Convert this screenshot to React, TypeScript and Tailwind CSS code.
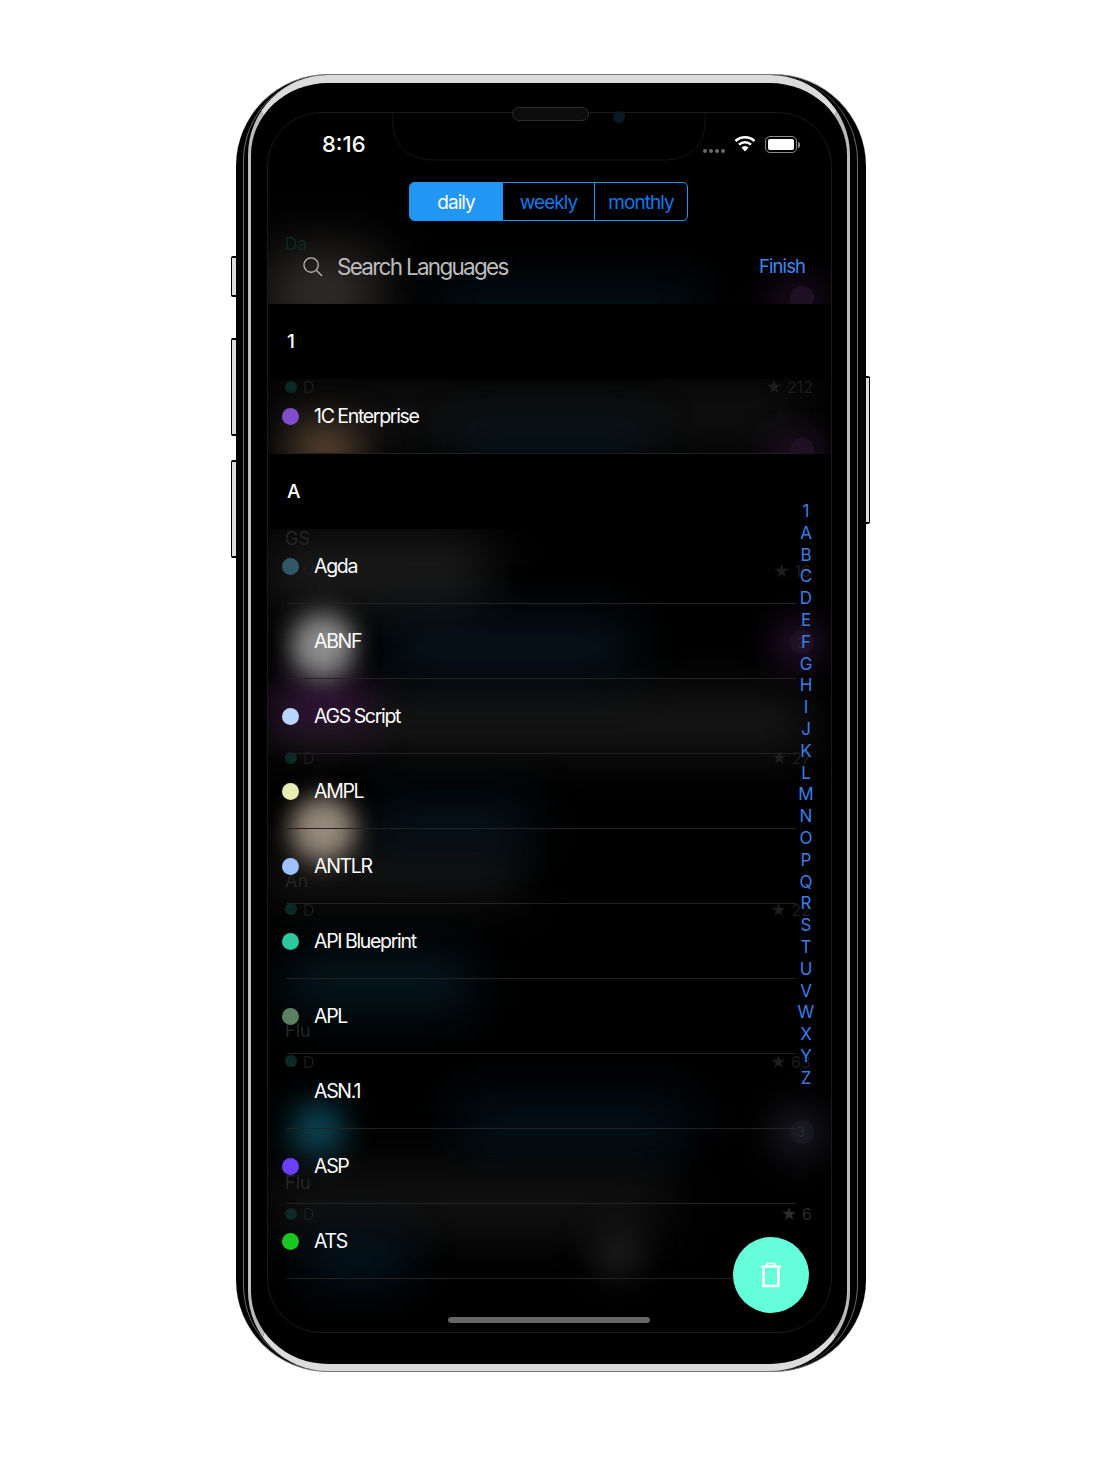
const sections = [
  {
    title: "1",
    rows: [{ name: "1C Enterprise", dot: "bg-[#814ccc]" }],
  },
  {
    title: "A",
    rows: [
      { name: "Agda", dot: "bg-[#315665]" },
      { name: "ABNF", dot: "" },
      { name: "AGS Script", dot: "bg-[#b9d6ff]" },
      { name: "AMPL", dot: "bg-[#e6efb3]" },
      { name: "ANTLR", dot: "bg-[#9ec1ff]" },
      { name: "API Blueprint", dot: "bg-[#2dc8a0]" },
      { name: "APL", dot: "bg-[#5a8164]" },
      { name: "ASN.1", dot: "" },
      { name: "ASP", dot: "bg-[#6a40fd]" },
      { name: "ATS", dot: "bg-[#1ac620]" },
    ],
  },
];

const letters = "1ABCDEFGHIJKLMNOPQRSTUVWXYZ".split("");

// blurred list that scrolled behind the sheet
const glows = [
  "left-[0px] top-[140px] w-[110px] h-[80px] bg-[#4a4442]/70 blur-[28px]",
  "left-[170px] top-[175px] w-[260px] h-[36px] bg-[#041722]/80 blur-[22px]",
  "left-[505px] top-[170px] w-[50px] h-[44px] bg-[#2c1433]/70 blur-[18px]",
  "left-[0px] top-[272px] w-[540px] h-[60px] bg-[#101010] blur-[26px]",
  "left-[25px] top-[318px] w-[64px] h-[36px] bg-[#7a5c42] blur-[20px]",
  "left-[190px] top-[312px] w-[190px] h-[34px] bg-[#061c2a]/70 blur-[22px]",
  "left-[505px] top-[325px] w-[50px] h-[36px] bg-[#2c1433]/80 blur-[16px]",
  "left-[0px] top-[425px] w-[220px] h-[70px] bg-[#1c1c1c] blur-[26px]",
  "left-[0px] top-[580px] w-[540px] h-[60px] bg-[#171717] blur-[24px]",
  "left-[10px] top-[570px] w-[90px] h-[46px] bg-[#34143a] blur-[20px]",
  "left-[22px] top-[500px] w-[66px] h-[66px] rounded-full bg-[#8c8c8c] blur-[12px]",
  "left-[120px] top-[510px] w-[240px] h-[50px] bg-[#05151f] blur-[24px]",
  "left-[505px] top-[505px] w-[50px] h-[50px] rounded-full bg-[#22102a] blur-[16px]",
  "left-[0px] top-[735px] w-[250px] h-[50px] bg-[#181818] blur-[26px]",
  "left-[110px] top-[690px] w-[150px] h-[44px] bg-[#05151f] blur-[24px]",
  "left-[22px] top-[683px] w-[66px] h-[66px] rounded-full bg-[#978a7c] blur-[12px]",
  "left-[20px] top-[845px] w-[180px] h-[50px] bg-[#051a23] blur-[24px]",
  "left-[24px] top-[990px] w-[52px] h-[56px] rounded-full bg-[#0d4c5e] blur-[16px]",
  "left-[190px] top-[990px] w-[230px] h-[46px] bg-[#03131e] blur-[24px]",
  "left-[500px] top-[990px] w-[60px] h-[60px] rounded-full bg-[#14141c] blur-[16px]",
  "left-[0px] top-[1060px] w-[400px] h-[60px] bg-[#131313] blur-[26px]",
  "left-[40px] top-[1120px] w-[100px] h-[50px] bg-[#03131e] blur-[20px]",
  "left-[325px] top-[1115px] w-[50px] h-[50px] rounded-full bg-[#1c1c1c] blur-[16px]",
];

const ghosts = [
  { text: "Da", cls: "left-[17px] top-[123px] text-[17px] text-[#0c2a28]" },
  { text: "★ 212", cls: "right-[18px] top-[266px] text-[16px] text-[#1e1e1e]" },
  { text: "D", cls: "left-[35px] top-[266px] text-[16px] text-[#1c1c1c]" },
  { text: "GS", cls: "left-[17px] top-[417px] text-[18px] text-[#262626]" },
  { text: "D", cls: "left-[35px] top-[447px] text-[16px] text-[#1c1c1c]" },
  { text: "★ 16", cls: "right-[20px] top-[450px] text-[16px] text-[#1e1e1e]" },
  { text: "3", cls: "right-[25px] top-[522px] text-[15px] text-[#30223a]" },
  { text: "★ 27", cls: "right-[20px] top-[637px] text-[16px] text-[#1e1e1e]" },
  { text: "D", cls: "left-[35px] top-[637px] text-[16px] text-[#1c1c1c]" },
  { text: "An", cls: "left-[17px] top-[759px] text-[18px] text-[#262626]" },
  { text: "★ 22", cls: "right-[20px] top-[789px] text-[16px] text-[#1e1e1e]" },
  { text: "D", cls: "left-[35px] top-[789px] text-[16px] text-[#1c1c1c]" },
  { text: "Flu", cls: "left-[17px] top-[909px] text-[18px] text-[#262626]" },
  { text: "★ 63", cls: "right-[20px] top-[941px] text-[16px] text-[#1e1e1e]" },
  { text: "D", cls: "left-[35px] top-[941px] text-[16px] text-[#1c1c1c]" },
  { text: "3", cls: "right-[26px] top-[1012px] text-[14px] text-[#2a2a34]" },
  { text: "Flu", cls: "left-[17px] top-[1061px] text-[18px] text-[#262626]" },
  { text: "★ 6", cls: "right-[19px] top-[1093px] text-[16px] text-[#2c2c2c]" },
  { text: "D", cls: "left-[35px] top-[1093px] text-[16px] text-[#1c1c1c]" },
];

const ghostDots = [
  "top-[268px]",
  "top-[447px]",
  "top-[639px]",
  "top-[790px]",
  "top-[942px]",
  "top-[1095px]",
];

const ghostBadges = [
  "top-[173px] bg-[#1f1024]",
  "top-[325px] bg-[#1f1024]",
  "top-[517px] bg-[#1f1024]",
  "top-[1007px] bg-[#181820]",
];

function Wifi() {
  return (
    <svg width="22" height="17" viewBox="0 0 22 17" fill="none" className="ml-[9px] -mt-[2px]">
      <path d="M1.5 6 A14 14 0 0 1 20.5 6" stroke="white" strokeWidth="2.6" />
      <path d="M5 9.6 A9 9 0 0 1 17 9.6" stroke="white" strokeWidth="2.6" />
      <path d="M7.4 12.6 A5 5 0 0 1 14.6 12.6 L11 16.5 Z" fill="white" />
    </svg>
  );
}

function Battery() {
  return (
    <div className="ml-[9px] flex items-center">
      <div className="w-[32px] h-[17px] rounded-[5px] border border-[#8a8a8a] p-[2px]">
        <div className="w-full h-full rounded-[2px] bg-white" />
      </div>
      <div className="ml-[1px] w-[2px] h-[6px] rounded-r-full bg-[#8a8a8a]" />
    </div>
  );
}

function TrashIcon() {
  return (
    <svg width="22" height="26" viewBox="0 0 22 26" fill="none" stroke="white">
      <path d="M1 4.5 H21" strokeWidth="2.4" />
      <path d="M7 4 V1.5 H15 V4" strokeWidth="1.6" />
      <path d="M3.6 6 V24 H18.4 V6" strokeWidth="2.6" />
    </svg>
  );
}

export default function App() {
  return (
    <div className="relative w-[1105px] h-[1473px] bg-white pt-[74px] pl-[236px] font-['Inter','Noto_Sans',sans-serif]">
      {/* side buttons */}
      <div className="absolute left-[231px] top-[256px] w-[6px] h-[41px] rounded-l-[2px] bg-[#dddddd] border-y-2 border-l border-black" />
      <div className="absolute left-[231px] top-[338px] w-[6px] h-[98px] rounded-l-[2px] bg-[#dddddd] border-y-2 border-l border-black" />
      <div className="absolute left-[231px] top-[460px] w-[6px] h-[98px] rounded-l-[2px] bg-[#dddddd] border-y-2 border-l border-black" />
      <div className="absolute left-[865px] top-[376px] w-[5px] h-[148px] rounded-r-[2px] bg-[#dddddd] border-y-2 border-r border-black" />

      {/* phone body */}
      <div className="relative w-[630px] h-[1298px] rounded-[92px] bg-black border-y border-[#777777] pl-[7px] pr-[8px]">
        <div className="w-full h-full rounded-[86px] border-x border-[#6e6e6e] pl-[4px] pr-[7px]">
          <div className="w-full h-full rounded-[80px] border-x-[3px] border-t-[8px] border-b-[7px] border-x-[#bbbbbb] border-y-[#dcdcdc] bg-black pl-[16px] pr-[15px] pt-[29px]">
            {/* screen */}
            <div className="relative w-[565px] h-[1221px] rounded-[54px] overflow-hidden border border-[#1a1a1a] bg-black flex flex-col text-white">
              {glows.map((g) => (
                <div key={g} className={`absolute ${g}`} />
              ))}
              {ghostBadges.map((b) => (
                <div key={b} className={`absolute left-[522px] w-[24px] h-[24px] rounded-full ${b}`} />
              ))}
              {ghosts.map((g) => (
                <span key={g.cls} className={`absolute leading-none blur-[0.5px] ${g.cls}`}>
                  {g.text}
                </span>
              ))}
              {ghostDots.map((t) => (
                <div key={t} className={`absolute left-[17px] w-[12px] h-[12px] rounded-full bg-[#0b2a27] ${t}`} />
              ))}

              {/* status bar */}
              <div className="relative h-[69px] shrink-0 flex items-start pt-[20px] pl-[54px] pr-[31px]">
                <span className="text-[22px] font-medium leading-[22px]">8:16</span>
                <div className="ml-auto flex items-center pt-[3px]">
                  <div className="flex gap-[2px] mt-[12px]">
                    <span className="w-[4px] h-[4px] rounded-full bg-[#6a6a6a]" />
                    <span className="w-[4px] h-[4px] rounded-full bg-[#6a6a6a]" />
                    <span className="w-[4px] h-[4px] rounded-full bg-[#6a6a6a]" />
                    <span className="w-[4px] h-[4px] rounded-full bg-[#6a6a6a]" />
                  </div>
                  <Wifi />
                  <Battery />
                </div>
              </div>

              {/* segmented control */}
              <div className="relative shrink-0 self-start ml-[141px] flex w-[279px] h-[39px] rounded-[5px] border-[1.5px] border-[#2196f3] text-[19px] tracking-[-0.05em] overflow-hidden">
                <div className="w-[92px] pt-[3px] bg-[#2196f3] text-white flex items-center justify-center">daily</div>
                <div className="w-[92px] pt-[3px] border-l-[1.5px] border-[#2196f3] text-[#0f7be8] flex items-center justify-center">weekly</div>
                <div className="flex-1 pt-[3px] border-l-[1.5px] border-[#2196f3] text-[#0f7be8] flex items-center justify-center">monthly</div>
              </div>

              {/* search */}
              <div className="relative h-[83px] shrink-0 flex items-center pl-[35px] pr-[26px] pt-[8px]">
                <svg width="20" height="20" viewBox="0 0 21 21" fill="none" stroke="#b8b8b8" strokeWidth="1.4">
                  <circle cx="8.5" cy="8.5" r="7.5" />
                  <path d="M14 14 L20 20" />
                </svg>
                <span className="ml-[14px] text-[22.5px] tracking-[-1.72px] text-[#bdbdbd]">Search Languages</span>
                <span className="ml-auto text-[18.5px] tracking-[-0.05em] text-[#3f86f0]">Finish</span>
              </div>

              {/* list */}
              <div className="relative flex flex-col">
                {sections.map((s) => (
                  <div key={s.title}>
                    <div className="h-[75px] bg-black flex items-center pl-[19px] pt-[2px] text-[19px] font-medium">{s.title}</div>
                    {s.rows.map((r) => (
                      <div key={r.name} className="relative h-[75px] flex items-center pl-[14px]">
                        {r.dot ? <div className={`w-[17px] h-[17px] rounded-full ${r.dot}`} /> : <div className="w-[17px] h-[17px]" />}
                        <span className="ml-[15px] text-[19.5px] tracking-[-1.3px] [word-spacing:-0.5px]">{r.name}</span>
                        <div className="absolute left-[19px] right-[35px] bottom-[0px] h-px bg-[#222222]" />
                      </div>
                    ))}
                  </div>
                ))}
              </div>

              {/* alphabet index */}
              <div className="absolute right-[14px] top-[388px] w-[22px] flex flex-col items-center text-[#3c7de8] text-[17px]">
                {letters.map((l) => (
                  <span key={l} className="h-[21.81px] leading-[21.81px]">{l}</span>
                ))}
              </div>

              {/* delete button */}
              <div className="absolute left-[465px] top-[1124px] w-[76px] h-[76px] rounded-full bg-[#64ffda] flex items-center justify-center">
                <TrashIcon />
              </div>

              {/* home indicator */}
              <div className="absolute left-[180px] top-[1204px] w-[202px] h-[6px] rounded-full bg-[#666666]" />

              {/* notch */}
              <div className="absolute left-[123px] top-[-1px] w-[316px] h-[49px]">
                <svg width="316" height="49" viewBox="0 0 316 49" fill="black" stroke="#161616">
                  <path d="M0 0 H3 Q1 0 2 14 C4 34 18 48 44 48 H272 C298 48 312 34 314 14 Q315 0 313 0 H316" />
                </svg>
              </div>
            </div>
          </div>
        </div>

        {/* speaker and camera */}
        <div className="absolute left-[276px] top-[32px] w-[77px] h-[14px] rounded-full bg-[#0c0c0c] border border-[#2c2c2c]" />
        <div className="absolute left-[377px] top-[36px] w-[12px] h-[12px] rounded-full bg-[#0a1a22]" />
      </div>
    </div>
  );
}
